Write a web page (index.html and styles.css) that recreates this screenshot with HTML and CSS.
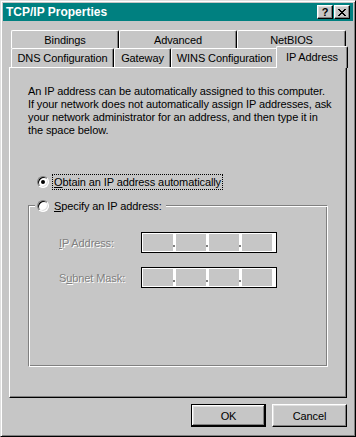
FILE: index.html
```html
<!DOCTYPE html>
<html lang="en">
  <head>
    <meta charset="UTF-8" />
    <title>TCP/IP Properties</title>
    <link rel="stylesheet" href="styles.css">
  </head>
  <body>
    <div class="window">
      <div class="titlebar">
        <span class="title">TCP/IP Properties</span>
        <div class="title_buttons">
          <span class="tbtn help">?</span>
          <span class="tbtn close">
            <svg width="8" height="7" viewBox="0 0 8 7"><path d="M0 0h2v1h1v1h2V1h1V0h2v1H7v1H6v1H5v1h1v1h1v1h1v1H6V6H5V5H3v1H2v1H0V6h1V5h1V4h1V3H2V2H1V1H0z" fill="#000"/></svg>
          </span>
        </div>
      </div>

      <div class="body">
        <div class="tabs">
          <div class="tab_row back">
            <div class="tab w108">Bindings</div>
            <div class="tab w118">Advanced</div>
            <div class="tab w109">NetBIOS</div>
          </div>
          <div class="tab_row front">
            <div class="tab w103">DNS Configuration</div>
            <div class="tab w57">Gateway</div>
            <div class="tab w107">WINS Configuration</div>
            <div class="tab selected">IP Address</div>
          </div>
        </div>

        <div class="panel">
          <p class="intro">An IP address can be automatically assigned to this computer.<br>If your network does not automatically assign IP addresses, ask<br>your network administrator for an address, and then type it in<br>the space below.</p>

          <div class="option">
            <span class="radio checked"></span>
            <span class="label focus"><u>O</u>btain an IP address automatically</span>
          </div>

          <fieldset class="group">
            <legend class="option">
              <span class="radio"></span>
              <span class="label"><u>S</u>pecify an IP address:</span>
            </legend>
            <div class="field_row">
              <span class="field_label"><u>I</u>P Address:</span>
              <div class="ipbox">
                <span class="seg"></span><span class="dot"></span><span class="seg"></span><span class="dot"></span><span class="seg"></span><span class="dot"></span><span class="seg"></span>
              </div>
            </div>
            <div class="field_row">
              <span class="field_label">S<u>u</u>bnet Mask:</span>
              <div class="ipbox">
                <span class="seg"></span><span class="dot"></span><span class="seg"></span><span class="dot"></span><span class="seg"></span><span class="dot"></span><span class="seg"></span>
              </div>
            </div>
          </fieldset>
        </div>

        <div class="buttons">
          <span class="btn default">OK</span>
          <span class="btn">Cancel</span>
        </div>
      </div>
    </div>
  </body>
</html>
```

FILE: styles.css
```css
body {
  margin: 0;
  background-color: #c6c6c6;
  font-family: "Liberation Sans", Arial, sans-serif;
  font-size: 11px;
  letter-spacing: -0.1px;
  color: #000;
}
.window {
  box-sizing: border-box;
  width: 356px;
  height: 437px;
  padding: 2px;
  background-color: #c6c6c6;
  border: 1px solid;
  border-color: #dfdfdf #000 #000 #dfdfdf;
  box-shadow: inset 1px 1px #fff, inset -1px -1px #808080;
}
.titlebar {
  height: 18px;
  background-color: #008080;
  display: flex;
  align-items: center;
  justify-content: space-between;
  padding: 0 3px 0 3px;
}
.title {
  color: #fff;
  font-weight: bold;
  font-size: 12px;
  letter-spacing: 0;
}
.title_buttons {
  display: flex;
  gap: 1px;
}
.tbtn {
  box-sizing: border-box;
  width: 16px;
  height: 14px;
  background-color: #c6c6c6;
  border: 1px solid;
  border-color: #fff #000 #000 #fff;
  box-shadow: inset -1px -1px #808080, inset 1px 1px #dfdfdf;
  display: flex;
  align-items: center;
  justify-content: center;
  font-weight: bold;
  font-size: 11px;
  line-height: 12px;
}
.tbtn svg {
  display: block;
}
.body {
  padding: 0 6px;
}

/* tabs */
.tabs {
  padding: 9px 1px 0 2px;
}
.tab_row {
  display: flex;
}
.tab_row.back {
  height: 18px;
}
.tab_row.front {
  height: 19px;
}
.tab {
  box-sizing: border-box;
  height: 100%;
  background-color: #c6c6c6;
  border-top: 1px solid #fff;
  border-left: 1px solid #fff;
  border-right: 1px solid #000;
  border-radius: 2px 2px 0 0;
  box-shadow: inset -1px 0 #808080;
  display: flex;
  align-items: center;
  justify-content: center;
  white-space: nowrap;
}
.w57 { width: 57px; }
.w103 { width: 103px; }
.w107 { width: 107px; }
.w108 { width: 108px; }
.w109 { width: 109px; }
.w118 { width: 118px; }
.tab.selected {
  position: relative;
  z-index: 2;
  top: -2px;
  width: 72px;
  height: 22px;
  margin: 0 -2px;
  padding-bottom: 2px;
}

/* page */
.panel {
  box-sizing: border-box;
  width: 338px;
  height: 331px;
  border: 1px solid;
  border-color: #fff #000 #000 #fff;
  box-shadow: inset -1px -1px #808080;
  padding: 17px 0 0 18px;
}
.intro {
  margin: 0;
  line-height: 13px;
  white-space: nowrap;
}
.option {
  display: flex;
  align-items: center;
  height: 17px;
  margin-top: 36px;
  padding-left: 9px;
}
.radio {
  box-sizing: border-box;
  position: relative;
  width: 12px;
  height: 12px;
  border-radius: 50%;
  background-color: #fff;
  border: 1px solid;
  border-color: #808080 #fff #fff #808080;
  box-shadow: inset 1px 1px #000, inset -1px -1px #dfdfdf;
}
.radio.checked::after {
  content: "";
  position: absolute;
  left: 3px;
  top: 3px;
  width: 4px;
  height: 4px;
  border-radius: 50%;
  background-color: #000;
}
.label {
  margin-left: 3px;
  padding: 1px 1px;
  border: 1px solid transparent;
  white-space: nowrap;
}
.label.focus {
  border: 1px dotted #000;
}

/* group box */
.group {
  box-sizing: border-box;
  width: 300px;
  height: 169px;
  margin: 8px 0 0 0;
  padding: 0;
  border: 1px solid;
  border-color: #808080 #fff #fff #808080;
  box-shadow: inset 1px 1px #fff, inset -1px -1px #808080;
}
.group legend.option {
  height: 15px;
  margin: 0 0 0 6px;
  padding: 0 2px;
  background-color: #c6c6c6;
}
.field_row {
  display: flex;
  align-items: center;
  margin-top: 19px;
  padding-left: 30px;
}
.field_row + .field_row {
  margin-top: 14px;
}
.field_label {
  width: 82px;
  color: #808080;
  text-shadow: 1px 1px #fff;
}
.ipbox {
  box-sizing: border-box;
  width: 136px;
  height: 21px;
  border: 1px solid #000;
  background-color: #fff;
  padding: 1px 4px 1px 1px;
  display: flex;
}
.seg {
  width: 30px;
  height: 17px;
  background-color: #c6c6c6;
}
.dot {
  position: relative;
  width: 3px;
}
.dot::after {
  content: "";
  position: absolute;
  left: 0;
  top: 11px;
  width: 2px;
  height: 2px;
  background-color: #808080;
}

/* dialog buttons */
.buttons {
  display: flex;
  justify-content: flex-end;
  gap: 6px;
  margin-top: 6px;
}
.btn {
  box-sizing: border-box;
  width: 75px;
  height: 23px;
  border: 1px solid;
  border-color: #fff #000 #000 #fff;
  box-shadow: inset -1px -1px #808080, inset 1px 1px #dfdfdf;
  display: flex;
  align-items: center;
  justify-content: center;
}
.btn.default {
  border-color: #000;
  box-shadow: inset -1px -1px #000, inset 1px 1px #fff, inset -2px -2px #808080, inset 2px 2px #dfdfdf;
}
```
